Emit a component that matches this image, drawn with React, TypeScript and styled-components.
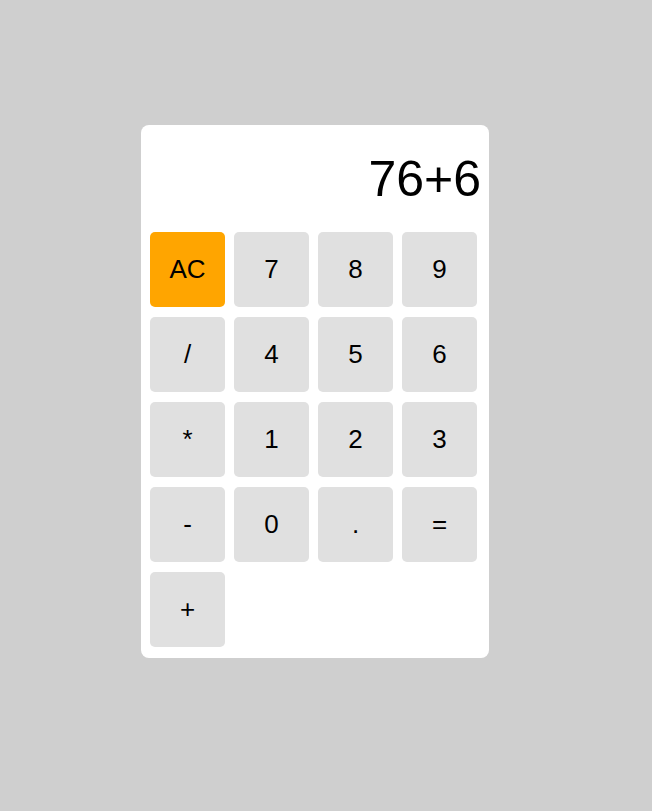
import React from "react";
import styled, { createGlobalStyle } from "styled-components";

const Global = createGlobalStyle`
  html, body {
    margin: 0;
    padding: 0;
    background: #cfcfcf;
    font-family: "Liberation Sans", Arial, sans-serif;
  }
`;

const Page = styled.div`
  min-height: 811px;
  padding: 125px 0 0 141px;
  box-sizing: border-box;
`;

const Card = styled.div`
  width: 348px;
  box-sizing: border-box;
  background: #ffffff;
  border-radius: 8px;
  padding: 0 12px 11px 9px;
`;

const Display = styled.div`
  height: 107px;
  display: flex;
  align-items: center;
  justify-content: flex-end;
  margin-right: -4px;
  font-size: 50px;
  color: #000;
  box-sizing: border-box;
`;

const Keys = styled.div`
  display: grid;
  grid-template-columns: repeat(4, 75px);
  grid-auto-rows: 75px;
  column-gap: 9px;
  row-gap: 10px;
`;

const Key = styled.button<{ $accent?: boolean }>`
  border: none;
  border-radius: 5px;
  background: ${(p) => (p.$accent ? "#ffa500" : "#e0e0e0")};
  color: #000;
  font-family: "Liberation Sans", Arial, sans-serif;
  font-size: 26px;
  padding: 0;
  display: flex;
  align-items: center;
  justify-content: center;
`;

const keys = ["AC", "7", "8", "9", "/", "4", "5", "6", "*", "1", "2", "3", "-", "0", ".", "=", "+"];

export default function App() {
  return (
    <>
      <Global />
      <Page>
        <Card>
          <Display>76+6</Display>
          <Keys>
            {keys.map((k) => (
              <Key key={k} $accent={k === "AC"}>
                {k}
              </Key>
            ))}
          </Keys>
        </Card>
      </Page>
    </>
  );
}
